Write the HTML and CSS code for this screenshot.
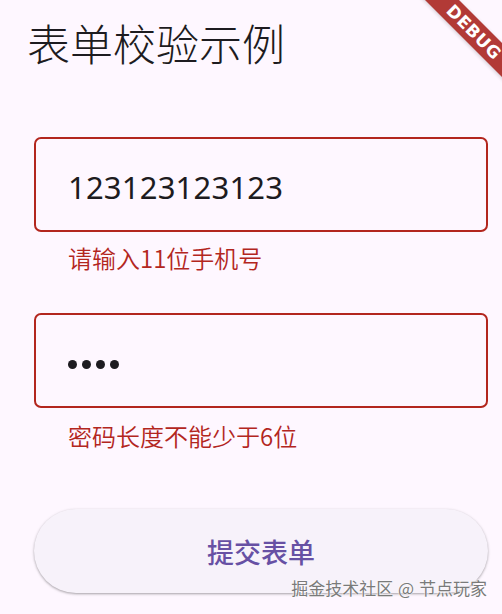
FILE: index.html
```html
<!DOCTYPE html>
<html lang="zh">
<head>
<meta charset="utf-8">
<link rel="stylesheet" href="styles.css">
</head>
<body>
<div class="app">
  <header class="appbar"><h1 class="title">表单校验示例</h1></header>
  <main class="form">
    <div class="field-group">
      <div class="field"><span class="value">123123123123</span></div>
      <div class="error">请输入11位手机号</div>
    </div>
    <div class="field-group">
      <div class="field"><span class="dots"><i></i><i></i><i></i><i></i></span></div>
      <div class="error">密码长度不能少于6位</div>
    </div>
    <button class="submit">提交表单</button>
  </main>
  <div class="watermark">掘金技术社区 @ 节点玩家</div>
  <div class="banner"><span>DEBUG</span></div>
</div>
</body>
</html>
```

FILE: styles.css
```css
* { box-sizing: border-box; }
html, body { margin: 0; padding: 0; }
body {
  background: #fef7ff;
  font-family: "Noto Sans", "Noto Sans CJK SC", sans-serif;
  color: #1d1b20;
  width: 502px;
  height: 614px;
  overflow: hidden;
}
.app { position: relative; width: 502px; height: 614px; overflow: hidden; }
.appbar {
  height: 84px;
  display: flex;
  align-items: center;
  padding-left: 27px;
}
.title {
  margin: 0;
  font-family: "Noto Sans CJK SC", sans-serif;
  font-weight: 300;
  font-size: 43px;
  line-height: 1;
  color: #1d1b20;
}
.form {
  padding: 53px 0 0 34px;
  display: flex;
  flex-direction: column;
}
.field-group { display: flex; flex-direction: column; }
.field {
  width: 454px;
  height: 95px;
  border: 2px solid #b3261e;
  border-radius: 7px;
  display: flex;
  align-items: center;
  padding: 4px 0 0 32px;
}
.value {
  font-family: "Noto Sans", sans-serif;
  font-size: 31px;
  color: #1d1b20;
  letter-spacing: 0.2px;
}
.dots { display: flex; gap: 5px; padding-top: 4px; }
.dots i {
  display: block;
  width: 9px; height: 9px;
  border-radius: 50%;
  background: #1d1b20;
}
.error {
  margin-top: 9px;
  padding-left: 34px;
  font-family: "Noto Sans CJK SC", sans-serif;
  font-weight: 350;
  font-size: 24px;
  line-height: 34px;
  color: #b3261e;
  height: 34px;
}
.field-group + .field-group { margin-top: 38px; }
.field-group:nth-child(2) .error { margin-top: 11px; }
.submit {
  margin-top: 56px;
  width: 454px;
  height: 84px;
  border: none;
  border-radius: 42px;
  background: #f7f2fa;
  box-shadow: 0 1px 3px rgba(0,0,0,0.25), 0 1px 2px rgba(0,0,0,0.12);
  font-family: "Noto Sans CJK SC", sans-serif;
  font-size: 27px;
  font-weight: 500;
  color: #6750a4;
  padding: 0;
}
.watermark {
  position: absolute;
  right: 15px;
  top: 577px;
  font-family: "Noto Sans CJK SC", sans-serif;
  font-size: 17px;
  line-height: 22px;
  color: #7a7a7a;
  text-shadow: 0 0 2px #fff, 0 0 1px #fff;
  word-spacing: 1px;
}
.banner {
  position: absolute;
  top: 20px;
  right: -42px;
  width: 140px;
  height: 24px;
  background: #b23a36;
  transform: rotate(45deg);
  display: flex;
  align-items: center;
  justify-content: center;
  box-shadow: 0 1px 4px rgba(0,0,0,0.18);
}
.banner span {
  font-family: "DejaVu Sans", sans-serif;
  font-weight: 700;
  font-size: 17px;
  color: #fff;
  letter-spacing: 0.5px;
}
```
